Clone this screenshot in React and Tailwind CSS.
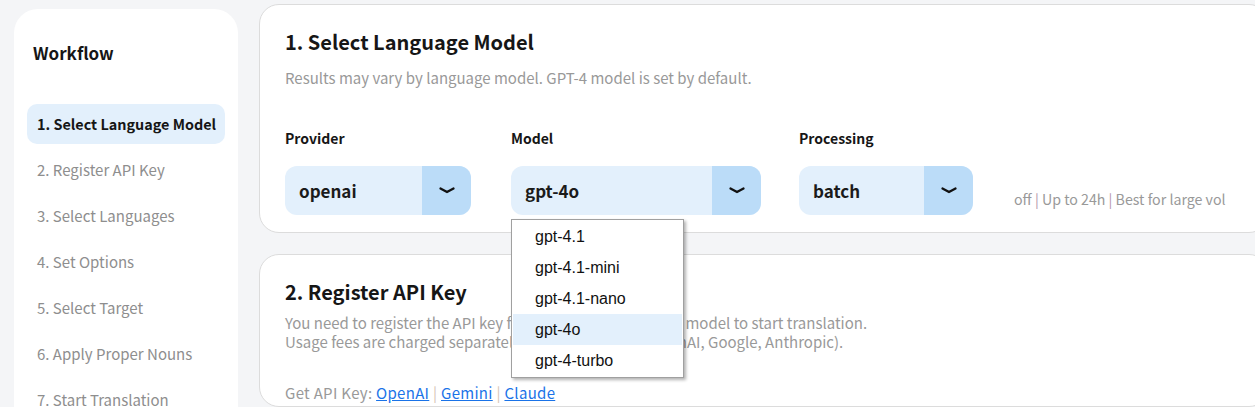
const font = {
  fontFamily: '"Noto Sans CJK KR", "Noto Sans", sans-serif',
};

const steps = [
  "1. Select Language Model",
  "2. Register API Key",
  "3. Select Languages",
  "4. Set Options",
  "5. Select Target",
  "6. Apply Proper Nouns",
  "7. Start Translation",
];

const models = ["gpt-4.1", "gpt-4.1-mini", "gpt-4.1-nano", "gpt-4o", "gpt-4-turbo"];

const Chevron = () => (
  <svg width="18" height="9" viewBox="0 0 18 9" fill="none">
    <polyline
      points="2.5,2.5 9,6 15.5,2.5"
      stroke="#111"
      strokeWidth="2.3"
      strokeLinecap="round"
      strokeLinejoin="round"
    />
  </svg>
);

const Select = ({ value, width }) => (
  <div
    className="flex h-[49px] rounded-xl overflow-hidden bg-[#e3f0fc]"
    style={{ width }}
  >
    <div className="flex-1 flex items-center pl-[14px] text-[17px] font-bold text-[#1b1b1b]">
      {value}
    </div>
    <div className="w-[49px] flex items-center justify-center bg-[#bbdcf8]">
      <Chevron />
    </div>
  </div>
);

const App = () => {
  return (
    <div
      className="h-[407px] w-[1255px] overflow-hidden bg-[#f4f5f7] flex"
      style={font}
    >
      {/* sidebar */}
      <div className="ml-[14px] mt-[9px] w-[224px] h-[420px] bg-white rounded-[24px] px-[13px] pt-[32px] shrink-0">
        <h2 className="pl-[6px] text-[17px] leading-[24px] font-bold text-[#161616]">
          Workflow
        </h2>
        <div className="mt-[39px] flex flex-col gap-[6px]">
          {steps.map((step, i) => (
            <div
              key={step}
              className={
                i === 0
                  ? "h-[40px] flex items-center px-[10px] rounded-[10px] bg-[#e3f0fc] text-[14.4px] font-bold text-[#161616] whitespace-nowrap"
                  : "h-[40px] flex items-center px-[10px] text-[15px] text-[#8e8e8e] whitespace-nowrap"
              }
            >
              {step}
            </div>
          ))}
        </div>
      </div>

      {/* main */}
      <div className="ml-[21px] w-[1010px] shrink-0 flex flex-col gap-[21px] pt-[4px]">
        <div className="bg-white rounded-[20px] border border-[#dcdcdc] px-[25px] pt-[23px] pb-[17px]">
          <h1 className="text-[20px] leading-[28px] font-bold text-[#161616]">
            1. Select Language Model
          </h1>
          <p className="mt-[12px] text-[15px] leading-[20px] text-[#999999]">
            Results may vary by language model. GPT-4 model is set by default.
          </p>
          <div className="mt-[40px] flex items-end">
            <div className="w-[186px]">
              <div className="text-[14px] leading-[20px] font-bold text-[#161616]">Provider</div>
              <div className="mt-[18px]">
                <Select value="openai" width={186} />
              </div>
            </div>
            <div className="ml-[40px] w-[250px] relative">
              <div className="text-[14px] leading-[20px] font-bold text-[#161616]">Model</div>
              <div className="mt-[18px]">
                <Select value="gpt-4o" width={250} />
              </div>
              <div
                className="absolute left-0 top-[91px] w-[173px] bg-white border border-[#a0a0a0] p-[1px] shadow-[2px_2px_3px_rgba(0,0,0,0.3)] z-10"
                style={{ fontFamily: '"Liberation Sans", Arial, sans-serif' }}
              >
                {models.map((m) => (
                  <div
                    key={m}
                    className={
                      m === "gpt-4o"
                        ? "h-[31px] flex items-center pl-[22px] text-[16px] text-[#111] bg-[#e3f0fc]"
                        : "h-[31px] flex items-center pl-[22px] text-[16px] text-[#111]"
                    }
                  >
                    {m}
                  </div>
                ))}
              </div>
            </div>
            <div className="ml-[38px] w-[174px]">
              <div className="text-[14px] leading-[20px] font-bold text-[#161616]">Processing</div>
              <div className="mt-[18px]">
                <Select value="batch" width={174} />
              </div>
            </div>
            <div className="ml-[41px] pb-[6px] text-[14.2px] leading-[20px] text-[#999999] whitespace-nowrap">
              off <span className="text-[#b496aa]">|</span> Up to 24h{" "}
              <span className="text-[#b496aa]">|</span> Best for large vol
            </div>
          </div>
        </div>

        <div className="bg-white rounded-[20px] border border-[#dcdcdc] px-[25px] pt-[23px] h-[200px]">
          <h1 className="text-[20px] leading-[28px] font-bold text-[#161616]">
            2. Register API Key
          </h1>
          <p className="mt-[7px] text-[15px] leading-[19px] text-[#999999]">
            You need to register the API key for the selected language model to start translation.
            <br />
            Usage fees are charged separately by each provider (OpenAI, Google, Anthropic).
          </p>
          <p className="mt-[32px] text-[15px] leading-[20px] text-[#999999] tracking-[0.3px]">
            Get API Key:{" "}
            <a href="#" className="text-[#1a73e8] underline">OpenAI</a>{" "}
            <span className="text-[#d6c4b4]">|</span>{" "}
            <a href="#" className="text-[#1a73e8] underline">Gemini</a>{" "}
            <span className="text-[#d6c4b4]">|</span>{" "}
            <a href="#" className="text-[#1a73e8] underline">Claude</a>
          </p>
        </div>
      </div>
    </div>
  );
};

export default App;
